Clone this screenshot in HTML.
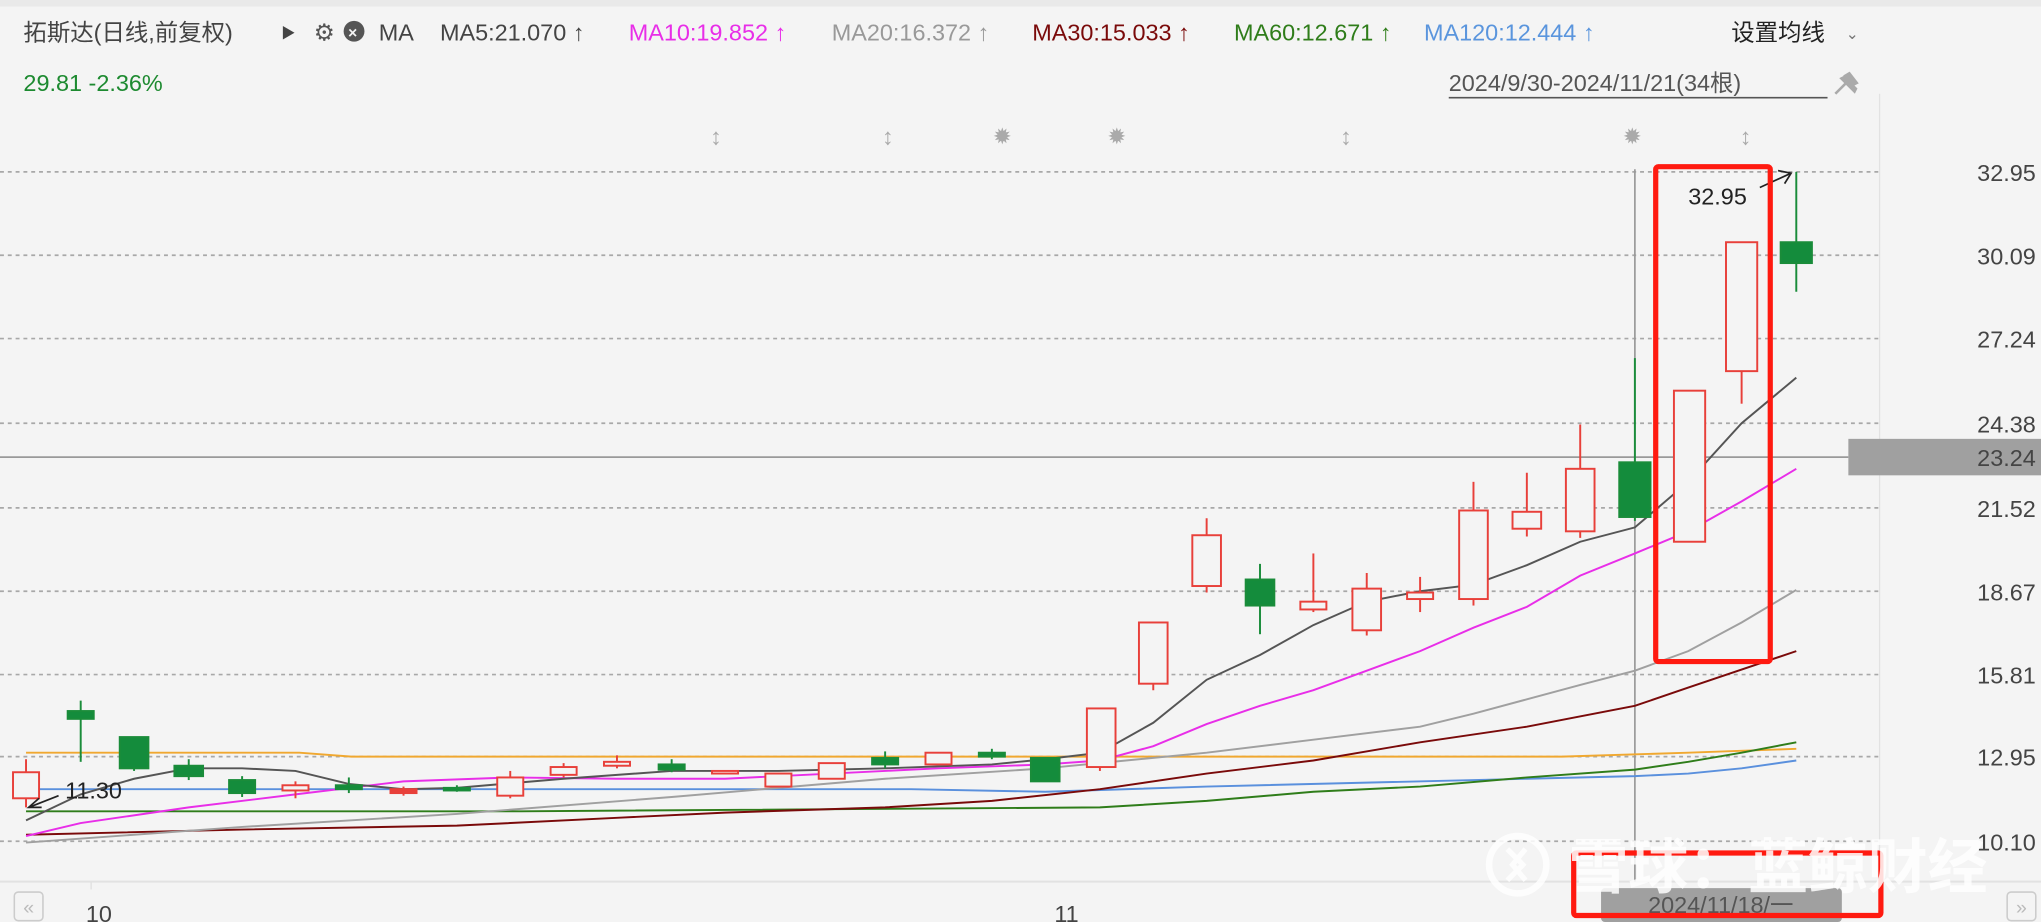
<!DOCTYPE html>
<html><head><meta charset="utf-8"><style>
html,body{margin:0;padding:0;background:#f4f4f4;}
svg{display:block;font-family:"Liberation Sans","Noto Sans CJK SC",sans-serif;}
</style></head><body>
<svg width="2041" height="922" viewBox="0 0 1568 708" preserveAspectRatio="none" xmlns="http://www.w3.org/2000/svg">
<rect width="1568" height="708" fill="#f4f4f4"/>
<rect width="1568" height="5" fill="#e9e9e9"/>
<g font-size="18">
<text x="18" y="31" fill="#444">拓斯达(日线,前复权)</text>
<text x="216" y="29" fill="#444" font-size="11">▶</text>
<text x="241" y="31" fill="#555">⚙</text>
<circle cx="272" cy="24" r="8" fill="#555"/><text x="267.5" y="29" fill="#f4f4f4" font-size="12" font-weight="bold">×</text>
<text x="291" y="31" fill="#444">MA</text>
<text x="338" y="31" fill="#444">MA5:21.070 ↑</text>
<text x="483" y="31" fill="#e82ee8">MA10:19.852 ↑</text>
<text x="639" y="31" fill="#999">MA20:16.372 ↑</text>
<text x="793" y="31" fill="#7a0a0a">MA30:15.033 ↑</text>
<text x="948" y="31" fill="#2f7d1a">MA60:12.671 ↑</text>
<text x="1094" y="31" fill="#5a95dd">MA120:12.444 ↑</text>
<text x="1330" y="31" fill="#222">设置均线</text>
<text x="1418" y="30" fill="#777" font-size="12">⌄</text>
<text x="18" y="70" fill="#1d8a30">29.81 -2.36%</text>
<text x="1113" y="70" fill="#555">2024/9/30-2024/11/21(34根)</text>
<line x1="1113" y1="75" x2="1404" y2="75" stroke="#555" stroke-width="1.3"/>
</g>
<g fill="#aaa" stroke="#aaa">
<polygon points="1416,58 1424,66 1428,64 1421,55" stroke="none"/>
<line x1="1419" y1="63" x2="1410" y2="72" stroke-width="2"/>
<polygon points="1413,60 1425,72 1427,68 1417,58" stroke="none"/>
</g>
<line x1="1444" y1="72" x2="1444" y2="677" stroke="#e2e2e2"/>
<line x1="0" y1="677" x2="1568" y2="677" stroke="#e2e2e2" stroke-width="1.5"/>
<g stroke="#a8a8a8" stroke-dasharray="3,3" stroke-width="1.3">
<line x1="0" y1="132" x2="1444" y2="132"/><line x1="0" y1="196" x2="1444" y2="196"/>
<line x1="0" y1="260" x2="1444" y2="260"/><line x1="0" y1="325" x2="1444" y2="325"/>
<line x1="0" y1="390" x2="1444" y2="390"/><line x1="0" y1="454" x2="1444" y2="454"/>
<line x1="0" y1="518" x2="1444" y2="518"/><line x1="0" y1="581" x2="1444" y2="581"/>
<line x1="0" y1="646" x2="1444" y2="646"/>
</g>
<g font-size="18" fill="#444" text-anchor="end">
<text x="1564" y="139">32.95</text><text x="1564" y="203">30.09</text><text x="1564" y="267">27.24</text>
<text x="1564" y="332">24.38</text><text x="1564" y="397">21.52</text><text x="1564" y="461">18.67</text>
<text x="1564" y="525">15.81</text><text x="1564" y="588">12.95</text><text x="1564" y="653">10.10</text>
</g>
<line x1="0" y1="351" x2="1420" y2="351" stroke="#999" stroke-width="1.3"/>
<rect x="1420" y="337" width="148" height="28" fill="#a0a0a0"/>
<text x="1564" y="358" font-size="18" fill="#444" text-anchor="end">23.24</text>
<g fill="#aaa" font-size="18" font-weight="bold" text-anchor="middle">
<text x="550" y="111">↕</text><text x="682" y="111">↕</text><text x="1034" y="111">↕</text><text x="1341" y="111">↕</text>
<text x="770" y="110" font-size="15">✹</text><text x="858" y="110" font-size="15">✹</text><text x="1254" y="110" font-size="15">✹</text>
</g>
<line x1="1256" y1="130" x2="1256" y2="677" stroke="#999" stroke-width="1.3"/>
<g fill="none" stroke-width="1.5">
<polyline stroke="#f0a830" points="20,578 230,578 270,581 1200,581 1297,578 1380,575"/>
<polyline stroke="#5a90dd" points="20,606 700,606 803,608 927,604 1050,601 1173,598 1256,596 1297,594 1338,590 1380,584"/>
<polyline stroke="#2f7d1a" points="20,623 400,623 845,620 927,615 1009,608 1091,604 1173,597 1256,591 1297,585 1338,578 1380,570"/>
<polyline stroke="#7a0a0a" points="20,641 186,637 351,634 474,628 557,624 680,620 762,615 845,606 927,594 1009,584 1091,570 1173,558 1256,542 1297,528 1380,500"/>
<polyline stroke="#a0a0a0" points="20,647 186,635 351,625 516,612 680,598 803,590 927,578 1009,568 1091,558 1132,548 1173,537 1214,526 1256,515 1297,500 1338,478 1380,453"/>
<polyline stroke="#e82ee8" points="20,642 62,632 145,620 227,610 310,600 392,597 474,598 557,598 639,594 721,590 803,587 845,584 886,573 927,556 968,542 1009,530 1050,515 1091,500 1132,482 1173,466 1214,442 1256,425 1297,408 1338,385 1380,360"/>
<polyline stroke="#555" points="20,630 62,610 103,598 145,590 186,590 227,592 268,602 310,606 351,605 433,598 516,592 598,592 680,590 762,587 803,583 845,578 886,555 927,522 968,503 1009,480 1050,462 1091,454 1132,449 1173,434 1214,416 1256,405 1297,370 1338,325 1380,290"/>
</g>
<g stroke-width="1.5">
<g stroke="#e8403a" fill="#f4f4f4">
<line x1="20" y1="583" x2="20" y2="620"/><rect x="10" y="593" width="20" height="20"/>
<line x1="227" y1="600" x2="227" y2="613"/><rect x="217" y="603" width="20" height="4"/>
<line x1="310" y1="604" x2="310" y2="611"/><rect x="300" y="606" width="20" height="3" fill="#e8403a"/>
<line x1="392" y1="592" x2="392" y2="613"/><rect x="382" y="597" width="20" height="14"/>
<line x1="433" y1="586" x2="433" y2="597"/><rect x="423" y="589" width="20" height="6"/>
<line x1="474" y1="580" x2="474" y2="590"/><rect x="464" y="585" width="20" height="3"/>
<rect x="547" y="592" width="20" height="2"/>
<rect x="588" y="594" width="20" height="10"/>
<rect x="629" y="586" width="20" height="12"/>
<rect x="711" y="578" width="20" height="9"/>
<line x1="845" y1="544" x2="845" y2="592"/><rect x="835" y="544" width="22" height="45"/>
<line x1="886" y1="478" x2="886" y2="530"/><rect x="875" y="478" width="22" height="47"/>
<line x1="927" y1="398" x2="927" y2="455"/><rect x="916" y="411" width="22" height="39"/>
<line x1="1009" y1="425" x2="1009" y2="470"/><rect x="999" y="462" width="20" height="6"/>
<line x1="1050" y1="440" x2="1050" y2="488"/><rect x="1039" y="452" width="22" height="32"/>
<line x1="1091" y1="443" x2="1091" y2="470"/><rect x="1081" y="455" width="20" height="5"/>
<line x1="1132" y1="370" x2="1132" y2="465"/><rect x="1121" y="392" width="22" height="68"/>
<line x1="1173" y1="363" x2="1173" y2="412"/><rect x="1162" y="393" width="22" height="13"/>
<line x1="1214" y1="326" x2="1214" y2="413"/><rect x="1203" y="360" width="22" height="48"/>
<rect x="1286" y="300" width="24" height="116"/>
<line x1="1338" y1="285" x2="1338" y2="310"/><rect x="1326" y="186" width="24" height="99"/>
</g>
<g stroke="#1a8c3a" fill="#148c3c">
<line x1="62" y1="538" x2="62" y2="585"/><rect x="52" y="546" width="20" height="6"/>
<line x1="103" y1="566" x2="103" y2="592"/><rect x="92" y="566" width="22" height="24"/>
<line x1="145" y1="583" x2="145" y2="599"/><rect x="134" y="588" width="22" height="8"/>
<line x1="186" y1="596" x2="186" y2="612"/><rect x="176" y="599" width="20" height="10"/>
<line x1="268" y1="597" x2="268" y2="609"/><rect x="258" y="603" width="20" height="3"/>
<line x1="351" y1="603" x2="351" y2="608"/><rect x="341" y="605" width="20" height="2"/>
<line x1="516" y1="583" x2="516" y2="593"/><rect x="506" y="587" width="20" height="4"/>
<line x1="680" y1="577" x2="680" y2="590"/><rect x="670" y="582" width="20" height="5"/>
<line x1="762" y1="575" x2="762" y2="583"/><rect x="752" y="578" width="20" height="3"/>
<rect x="792" y="582" width="22" height="18"/>
<line x1="968" y1="433" x2="968" y2="487"/><rect x="957" y="445" width="22" height="20"/>
<line x1="1256" y1="275" x2="1256" y2="400"/><rect x="1244" y="355" width="24" height="42"/>
<line x1="1380" y1="132" x2="1380" y2="224"/><rect x="1368" y="186" width="24" height="16"/>
</g>
</g>
<text x="50" y="613" font-size="18" fill="#222">11.30</text>
<polyline points="45,611 22,620" stroke="#222" fill="none" stroke-width="1.3"/>
<polyline points="30,613 22,620 32,620" stroke="#222" fill="none" stroke-width="1.3"/>
<text x="1297" y="157" font-size="18" fill="#222">32.95</text>
<polyline points="1352,144 1376,133" stroke="#222" fill="none" stroke-width="1.3"/>
<polyline points="1366,131 1376,133 1371,141" stroke="#222" fill="none" stroke-width="1.3"/>
<rect x="1272" y="128" width="88" height="380" rx="2" fill="none" stroke="#ff1a10" stroke-width="4"/>
<rect x="1230" y="682" width="185" height="26" rx="3" fill="#a0a0a0"/>
<text x="1322" y="701" font-size="18" fill="#555" text-anchor="middle">2024/11/18/一</text>
<rect x="1209" y="655" width="236" height="48" rx="2" fill="none" stroke="#ff1a10" stroke-width="4"/>
<text x="66" y="708" font-size="18" fill="#444">10</text>
<text x="810" y="708" font-size="18" fill="#444">11</text>
<line x1="70" y1="677" x2="70" y2="683" stroke="#e0e0e0"/>
<rect x="11" y="685" width="22" height="22" rx="3" fill="none" stroke="#ccc" stroke-width="1.2"/>
<text x="22" y="702" font-size="15" fill="#bbb" text-anchor="middle">«</text>
<rect x="1542" y="685" width="22" height="22" rx="3" fill="none" stroke="#ccc" stroke-width="1.2"/>
<text x="1553" y="702" font-size="15" fill="#bbb" text-anchor="middle">»</text>
<g opacity="0.85">
<circle cx="1166" cy="664" r="22" fill="none" stroke="#fff" stroke-width="5"/>
<path d="M1158,652 L1170,664 L1158,676 M1172,652 L1162,664 L1172,676" stroke="#fff" stroke-width="4" fill="none"/>
<text x="1205" y="682" font-size="46" fill="#fff" font-weight="bold">雪球：蓝鲸财经</text>
</g>
</svg>
</body></html>
